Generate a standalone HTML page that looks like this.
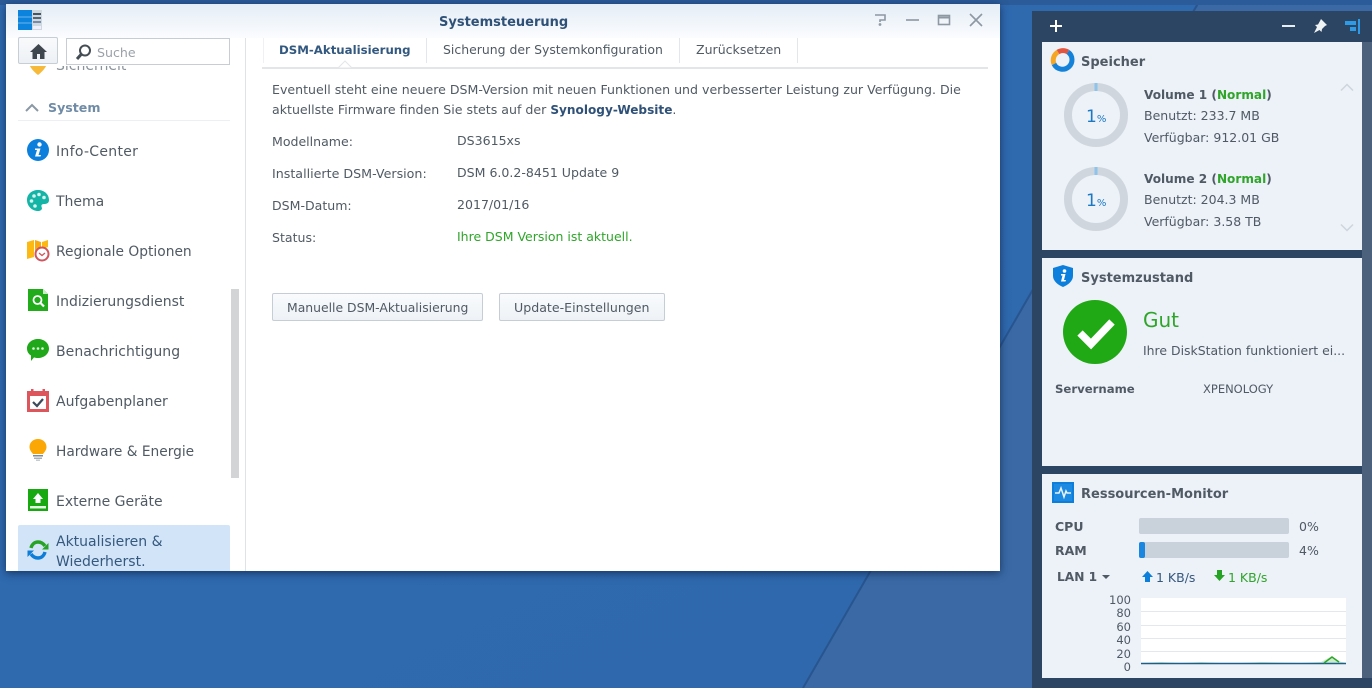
<!DOCTYPE html>
<html><head><meta charset="utf-8"><style>
html,body{margin:0;padding:0}
body{width:1372px;height:688px;overflow:hidden;position:relative;background:#30689f;font-family:"DejaVu Sans","Liberation Sans",sans-serif;font-size:13px;color:#505a64}
.t{position:absolute;white-space:nowrap;line-height:16px}
.a{position:absolute}
.b{font-weight:bold}
svg{position:absolute;overflow:visible}
.s{font-size:12.5px;color:#505a64}
.n{font-size:14px;color:#505a64}
.c{font-size:12.55px}
</style></head><body>
<svg style="left:0;top:0" width="1372" height="688"><defs><linearGradient id="bg" x1="0" y1="0" x2="1" y2="1"><stop offset="0" stop-color="#2f6ab0"/><stop offset="1" stop-color="#2f68ac"/></linearGradient></defs>
<rect width="1372" height="688" fill="url(#bg)"/>
<polygon points="1200,0 1372,0 1372,688 803,688" fill="#3a69a5"/>
<line x1="1200" y1="0" x2="803" y2="688" stroke="#28558f" stroke-width="2"/>
<rect width="1372" height="5" fill="#2b5b98"/></svg>

<!-- window -->
<div class="a" style="left:6px;top:4px;width:994px;height:567px;background:#fff;box-shadow:0 2px 8px rgba(15,35,70,.75)"></div>
<div class="a" style="left:6px;top:4px;width:994px;height:34px;background:linear-gradient(#e4edf6,#fbfcfe)"></div>
<svg style="left:18px;top:10px" width="24" height="20"><rect width="14" height="20" fill="#0c83dc"/><line x1="0" y1="7" x2="14" y2="7" stroke="#6bb6ee"/><line x1="0" y1="13" x2="14" y2="13" stroke="#6bb6ee"/><rect x="14" width="10" height="20" fill="#cfd8df"/><rect x="15" y="3" width="8" height="2" fill="#456"/><rect x="15" y="7" width="8" height="2" fill="#567"/><rect x="15" y="11" width="8" height="2" fill="#78a"/><rect x="15" y="16" width="8" height="3" fill="#eef"/></svg>
<div class="t b" style="left:439px;top:15px;font-size:13px;color:#2f5178">Systemsteuerung</div>
<svg style="left:874px;top:13px" width="106" height="14" fill="none" stroke="#8d98a3" stroke-width="1.6"><path d="M1 2H11V7H6V9"/><circle cx="6" cy="11.5" r=".6"/><path d="M32 7H45"/><rect x="64.5" y="2.5" width="11" height="9"/><path d="M64 4.5H76" stroke-width="2"/><path d="M96 1L108 13M108 1L96 13"/></svg>

<!-- sidebar -->
<div class="a" style="left:245px;top:38px;width:1px;height:533px;background:#dfe3e8"></div>
<div class="a" style="left:231px;top:289px;width:8px;height:189px;background:#d2d4d6"></div>
<svg style="left:27px;top:58px" width="22" height="18"><path d="M1 0H21C21 8 16 13 11 17C6 13 1 8 1 0Z" fill="#f6b93a"/></svg>
<div class="t" style="left:56px;top:58px;color:#8a929a;font-size:14px">Sicherheit</div>
<div class="a" style="left:18px;top:38px;width:214px;height:28px;background:#fff"></div>
<div class="a" style="left:18px;top:37px;border:1px solid #c6ced6;border-radius:2px;background:linear-gradient(#f9fafc,#edf1f5);height:25px;width:38px"></div>
<svg style="left:30px;top:44px" width="17" height="15"><path d="M8.5 0L17 8H14.5V15H10V10H7V15H2.5V8H0Z" fill="#3f464d"/></svg>
<div class="a" style="left:66px;top:38px;width:162px;height:25px;border:1px solid #c6cdd4;background:#fff"></div>
<svg style="left:75px;top:44px" width="17" height="16" fill="none" stroke="#444c54"><circle cx="10" cy="6.5" r="5" stroke-width="2"/><path d="M6.5 10L2 15" stroke-width="3"/></svg>
<div class="t" style="left:97px;top:45px;color:#9aa1a8;font-size:12.6px">Suche</div>
<svg style="left:25px;top:103px" width="14" height="9" fill="none" stroke="#8b97a3" stroke-width="2"><path d="M1 8L7 2L13 8"/></svg>
<div class="t b" style="left:48px;top:100px;color:#6f8ba6;font-size:12.6px">System</div>
<div class="a" style="left:18px;top:120px;width:212px;height:1px;background:#edf0f3"></div>
<div class="a" style="left:18px;top:525px;width:212px;height:46px;background:#d2e4f7;border-radius:2px 2px 0 0"></div>

<div class="t n" style="left:56px;top:144px;letter-spacing:.3px">Info-Center</div>
<div class="t n" style="left:56px;top:194px">Thema</div>
<div class="t n" style="left:56px;top:244px;font-size:13.8px">Regionale Optionen</div>
<div class="t n" style="left:56px;top:294px">Indizierungsdienst</div>
<div class="t n" style="left:56px;top:344px;letter-spacing:.05px">Benachrichtigung</div>
<div class="t n" style="left:56px;top:394px">Aufgabenplaner</div>
<div class="t n" style="left:56px;top:444px;font-size:13.75px">Hardware &amp; Energie</div>
<div class="t n" style="left:56px;top:494px">Externe Geräte</div>
<div class="t n" style="left:56px;top:534px;color:#35587f">Aktualisieren &amp;</div>
<div class="t n" style="left:56px;top:554px;color:#35587f">Wiederherst.</div>

<svg style="left:27px;top:139px" width="22" height="22"><circle cx="11" cy="11" r="11" fill="#0c7fdc"/><circle cx="12.5" cy="5.5" r="2.2" fill="#fff"/><path d="M8 9.5H13.5L11.5 16H14L13.5 17.5H8L10 11H8Z" fill="#fff"/></svg>
<svg style="left:27px;top:190px" width="22" height="21"><path d="M11 0C17 0 22 4 22 10C22 13 20 14 17 14C14 14 14 16 15 18C15 20 13 21 11 21C5 21 0 16 0 10C0 4 5 0 11 0Z" fill="#14b5a6"/><g fill="#d6f3ef"><circle cx="7" cy="6" r="1.8"/><circle cx="12" cy="4.5" r="1.8"/><circle cx="17" cy="7.5" r="1.8"/><circle cx="4.5" cy="11" r="1.8"/><circle cx="8" cy="16" r="1.8"/></g></svg>
<svg style="left:27px;top:239px" width="23" height="22"><path d="M0 3L7 1V18L0 20Z" fill="#fcb813"/><path d="M8 1L14 3V12L8 18Z" fill="#f9a90c"/><path d="M15 3L21 1V8L15 10Z" fill="#fcb813"/><circle cx="15" cy="15" r="6.5" fill="#fff" stroke="#d2545c" stroke-width="2"/><path d="M12 14L15 16.5L18 14" fill="none" stroke="#d2545c" stroke-width="1.3"/></svg>
<svg style="left:28px;top:289px" width="20" height="22"><path d="M0 0H15L20 5V22H0Z" fill="#22ac1c"/><path d="M15 0L20 5H15Z" fill="#c9eec7"/><circle cx="9.5" cy="11" r="4" fill="none" stroke="#fff" stroke-width="1.8"/><path d="M12.5 14L16 17.5" stroke="#fff" stroke-width="2.2"/></svg>
<svg style="left:27px;top:339px" width="22" height="22"><path d="M11 0C17 0 22 4 22 9.5C22 15 17 19 11 19C9.500 19 8 18.800 7 18.400L4 22V16.500C1.500 15 0 12.500 0 9.500C0 4 5 0 11 0Z" fill="#20a81a"/><g fill="#dff5dd"><circle cx="6.500" cy="9.500" r="1.300"/><circle cx="11" cy="9.500" r="1.300"/><circle cx="15.500" cy="9.500" r="1.300"/></g></svg>
<svg style="left:27px;top:389px" width="22" height="23"><rect y="2" width="22" height="21" fill="#dd565c"/><rect x="3" y="7" width="16" height="13" fill="#fff"/><rect x="4" y="0" width="2.500" height="4" fill="#dd565c"/><rect x="15.500" y="0" width="2.500" height="4" fill="#dd565c"/><path d="M6 13L10 17L16 10" fill="none" stroke="#3c4a5c" stroke-width="2.200"/></svg>
<svg style="left:29px;top:439px" width="18" height="22"><path d="M9 0C14 0 17.500 3.500 17.500 8C17.500 11 15.500 13 14 15H4C2.500 13 .5 11 .5 8C.5 3.500 4 0 9 0Z" fill="#fba806"/><rect x="4" y="16" width="10" height="1.500" fill="#7e8a94"/><rect x="5" y="18.500" width="8" height="1.500" fill="#a7b0b8"/><rect x="7" y="20.500" width="4" height="1.500" fill="#c4cbd1"/></svg>
<svg style="left:28px;top:489px" width="20" height="22"><rect width="20" height="22" fill="#18a910"/><path d="M10 4L15 10H12.500V14H7.500V10H5Z" fill="#fff"/><rect x="2" y="17" width="16" height="2.500" fill="#e5f5e3"/></svg>
<svg style="left:27px;top:540px" width="22" height="20" fill="none" stroke-width="3.400"><path d="M4 8C5 4 8 2 11 2C14 2 16 3 18 6" stroke="#26a325"/><path d="M21.500 3V9.500H15Z" fill="#26a325" stroke="none"/><path d="M18 12C17 16 14 18 11 18C8 18 6 17 4 14" stroke="#0e7dd8"/><path d="M.5 17V10.500H7Z" fill="#0e7dd8" stroke="none"/></svg>

<!-- tabs -->
<div class="a" style="left:262px;top:67px;width:726px;height:2px;background:#e3e6e9"></div>
<div class="a" style="left:426px;top:38px;width:1px;height:25px;background:#e3e7eb"></div>
<div class="a" style="left:679px;top:38px;width:1px;height:25px;background:#e3e7eb"></div>
<div class="a" style="left:797px;top:38px;width:1px;height:25px;background:#e3e7eb"></div>
<div class="a" style="left:263px;top:38px;width:1px;height:25px;background:#eef0f3"></div>
<svg style="left:338px;top:61px" width="14" height="8"><path d="M0 7L7 0L14 7Z" fill="#fff" stroke="#e3e6e9"/></svg>
<div class="t b" style="left:279px;top:41px;color:#33587f;font-size:11.75px;line-height:16px;margin-top:1px">DSM-Aktualisierung</div>
<div class="t" style="left:443px;top:42px;font-size:12.45px">Sicherung der Systemkonfiguration</div>
<div class="t" style="left:696px;top:42px;font-size:12.55px">Zurücksetzen</div>

<!-- content -->
<div class="t" style="left:272px;top:82px;font-size:12.58px">Eventuell steht eine neuere DSM-Version mit neuen Funktionen und verbesserter Leistung zur Verfügung. Die</div>
<div class="t" style="left:272px;top:102px;font-size:12.6px">aktuellste Firmware finden Sie stets auf der <span class="b" style="color:#2f5178;font-size:12.1px">Synology-Website</span>.</div>
<div class="t c" style="left:272px;top:134px">Modellname:</div><div class="t c" style="left:457px;top:133px">DS3615xs</div>
<div class="t" style="left:272px;top:166px;font-size:12.67px">Installierte DSM-Version:</div><div class="t c" style="left:457px;top:165px">DSM 6.0.2-8451 Update 9</div>
<div class="t c" style="left:272px;top:198px">DSM-Datum:</div><div class="t c" style="left:457px;top:197px">2017/01/16</div>
<div class="t c" style="left:272px;top:230px">Status:</div><div class="t" style="left:457px;top:229px;font-size:12.5px;color:#2fa52a">Ihre DSM Version ist aktuell.</div>
<div class="a" style="left:272px;top:293px;width:209px;height:26px;border:1px solid #c5ced7;border-radius:2px;background:linear-gradient(#f9fbfd,#eef2f6)"></div>
<div class="a" style="left:499px;top:293px;width:164px;height:26px;border:1px solid #c5ced7;border-radius:2px;background:linear-gradient(#f9fbfd,#eef2f6)"></div>
<div class="t" style="left:287px;top:300px;font-size:12.4px">Manuelle DSM-Aktualisierung</div>
<div class="t" style="left:514px;top:300px;font-size:12.6px">Update-Einstellungen</div>

<!-- widget panel -->
<div class="a" style="left:1032px;top:11px;width:340px;height:677px;background:#2b4563"></div>
<div class="a" style="left:1362px;top:42px;width:10px;height:636px;background:#4b617c"></div>
<svg style="left:1050px;top:20px" width="12" height="12"><path d="M6 0V12M0 6H12" stroke="#fff" stroke-width="2"/></svg>
<svg style="left:1282px;top:25px" width="13" height="3"><rect width="13" height="2" fill="#e8edf2"/></svg>
<svg style="left:1313px;top:19px" width="14" height="14"><path d="M8 0L14 6L12 7L9 10L8.500 13L6.500 11L1 14L4 8L2 6L5 5.500L7 2Z" fill="#f0f3f6"/></svg>
<svg style="left:1345px;top:19px" width="15" height="15"><rect x="13" width="2" height="15" fill="#2d9be8"/><rect y="2" width="11" height="4" fill="#2d9be8"/><rect x="5" y="8" width="6" height="4" fill="#2d9be8"/></svg>

<div class="a" style="left:1042px;top:42px;width:320px;height:208px;background:#edf1f8"></div>
<div class="a" style="left:1042px;top:258px;width:320px;height:208px;background:#edf1f8"></div>
<div class="a" style="left:1042px;top:474px;width:320px;height:204px;background:#edf1f8"></div>

<!-- Speicher -->
<svg style="left:1051px;top:48px" width="24" height="24" fill="none" stroke-width="5"><path d="M3 16A9.500 9.500 0 0 1 7 4" stroke="#f5a623"/><path d="M7 4A9.500 9.500 0 0 1 17 4" stroke="#e2563f"/><path d="M17 4A9.500 9.500 0 1 1 3 16" stroke="#1382d8"/></svg>
<div class="t b" style="left:1081px;top:55px;font-size:13px">Speicher</div>
<svg style="left:1064px;top:83px" width="64" height="64" fill="none"><circle cx="32" cy="32" r="28" stroke="#cfd6dd" stroke-width="8"/><path d="M32 0V8" stroke="#8ec3ea" stroke-width="3"/></svg>
<svg style="left:1064px;top:167px" width="64" height="64" fill="none"><circle cx="32" cy="32" r="28" stroke="#cfd6dd" stroke-width="8"/><path d="M32 0V8" stroke="#8ec3ea" stroke-width="3"/></svg>
<div class="t" style="left:1086px;top:109px;font-size:17px;color:#1a78c4;font-weight:500">1<span style="font-size:10px">%</span></div>
<div class="t" style="left:1086px;top:193px;font-size:17px;color:#1a78c4;font-weight:500">1<span style="font-size:10px">%</span></div>
<div class="t b" style="left:1144px;top:87px;font-size:12.1px">Volume 1 (<span style="color:#2fa52a">Normal</span>)</div>
<div class="t s" style="left:1144px;top:108px">Benutzt: 233.7 MB</div>
<div class="t s" style="left:1144px;top:130px">Verfügbar: 912.01 GB</div>
<div class="t b" style="left:1144px;top:171px;font-size:12.1px">Volume 2 (<span style="color:#2fa52a">Normal</span>)</div>
<div class="t s" style="left:1144px;top:192px">Benutzt: 204.3 MB</div>
<div class="t s" style="left:1144px;top:214px">Verfügbar: 3.58 TB</div>
<svg style="left:1341px;top:84px" width="12" height="7" fill="none" stroke="#cdd5dd" stroke-width="1.500"><path d="M0 6.500L6 .5L12 6.500"/></svg>
<svg style="left:1341px;top:224px" width="12" height="7" fill="none" stroke="#cdd5dd" stroke-width="1.500"><path d="M0 .5L6 6.500L12 .5"/></svg>

<!-- Systemzustand -->
<svg style="left:1053px;top:265px" width="20" height="22"><path d="M10 0L20 3V11C20 16 15 20 10 22C5 20 0 16 0 11V3Z" fill="#0c7fdc"/><circle cx="11.500" cy="6" r="1.800" fill="#fff"/><path d="M8 9H12.500L11 15H13L12.500 16.500H8L9.500 10.500H8Z" fill="#fff"/></svg>
<div class="t b" style="left:1081px;top:271px;font-size:13px">Systemzustand</div>
<svg style="left:1063px;top:300px" width="64" height="64"><circle cx="32" cy="32" r="32" fill="#20a915"/><path d="M17 33L28 44L49 22" fill="none" stroke="#fff" stroke-width="7.500"/></svg>
<div class="t" style="left:1143px;top:310px;font-size:20px;line-height:20px;color:#2fa52a">Gut</div>
<div class="t s" style="left:1143px;top:343px;font-size:12.45px">Ihre DiskStation funktioniert ei...</div>
<div class="t b" style="left:1055px;top:381px;font-size:11.7px">Servername</div>
<div class="t" style="left:1203px;top:381px;font-size:11.5px">XPENOLOGY</div>

<!-- Resource -->
<svg style="left:1052px;top:482px" width="22" height="21"><rect width="22" height="21" fill="#0c7fdc"/><rect x="2" y="2" width="18" height="17" fill="#1c8ae0"/><path d="M3 11H7L9 6L12 15L14 9L15 11H19" fill="none" stroke="#e8f3fc" stroke-width="1.500"/></svg>
<div class="t b" style="left:1081px;top:487px;font-size:13px">Ressourcen-Monitor</div>
<div class="t b" style="left:1055px;top:519px;font-size:12.5px">CPU</div>
<div class="t b" style="left:1055px;top:543px;font-size:12.5px">RAM</div>
<div class="a" style="left:1139px;top:518px;width:150px;height:16px;background:#c9d1da;border-radius:2px"></div>
<div class="a" style="left:1139px;top:542px;width:150px;height:16px;background:#c9d1da;border-radius:2px"></div>
<div class="a" style="left:1139px;top:542px;width:6px;height:16px;background:#1b86df;border-radius:2px"></div>
<div class="t s" style="left:1299px;top:519px">0%</div>
<div class="t s" style="left:1299px;top:543px">4%</div>
<div class="t b" style="left:1057px;top:569px;font-size:12.2px">LAN 1</div>
<svg style="left:1102px;top:575px" width="8" height="4"><path d="M0 0H8L4 4Z" fill="#505a64"/></svg>
<svg style="left:1142px;top:571px" width="11" height="11"><path d="M5.500 0L11 6H8V11H3V6H0Z" fill="#0c7fdc"/></svg>
<svg style="left:1214px;top:570px" width="11" height="11"><path d="M5.500 11L11 5H8V0H3V5H0Z" fill="#26a325"/></svg>
<div class="t" style="left:1156px;top:570px;font-size:12.5px;color:#35587f">1 KB/s</div>
<div class="t" style="left:1228px;top:570px;font-size:12.5px;color:#2fa52a">1 KB/s</div>
<svg style="left:1141px;top:598px" width="205" height="68"><rect width="205" height="66" fill="#fff"/><g stroke="#e4e8ec"><path d="M0 13.500H205M0 27.500H205M0 40.500H205M0 53.500H205"/></g><path d="M0 65L20 64L40 65L60 64L80 65L100 65L120 64L160 65L180 64L191 58L197 63L205 65V66H0Z" fill="#cdeccb"/><path d="M0 65.500H205" stroke="#1c5f8c" stroke-width="1.500"/><path d="M183 65L191 59L198 64" fill="none" stroke="#2aa52a" stroke-width="1.500"/></svg>
<div class="t" style="right:241px;top:592px;font-size:11.5px">100</div>
<div class="t" style="right:241px;top:605px;font-size:11.5px">80</div>
<div class="t" style="right:241px;top:619px;font-size:11.5px">60</div>
<div class="t" style="right:241px;top:632px;font-size:11.5px">40</div>
<div class="t" style="right:241px;top:646px;font-size:11.5px">20</div>
<div class="t" style="right:241px;top:659px;font-size:11.5px">0</div>
</body></html>
